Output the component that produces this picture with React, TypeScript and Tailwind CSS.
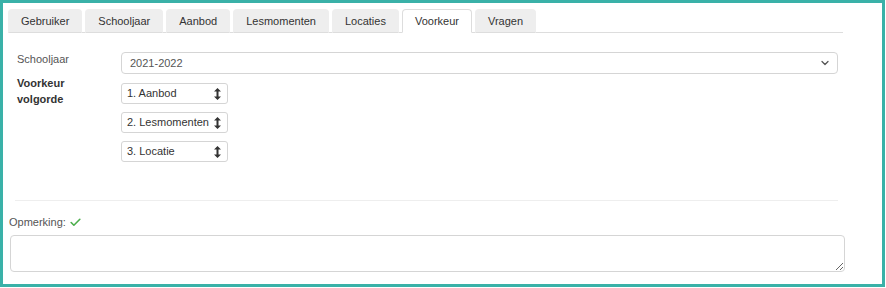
import React from 'react';
import { ChevronDown, Check } from 'lucide-react';

const tabs = ['Gebruiker', 'Schooljaar', 'Aanbod', 'Lesmomenten', 'Locaties', 'Voorkeur', 'Vragen'];
const order = ['1. Aanbod', '2. Lesmomenten', '3. Locatie'];

// font awesome style "arrows-v"
const ArrowsV = () => (
  <svg width="7" height="12" viewBox="0 0 7 12" className="fill-[#333]">
    <path d="M3.5 0 L7 3.5 H4.5 V8.5 H7 L3.5 12 L0 8.5 H2.5 V3.5 H0 Z" />
  </svg>
);

const App: React.FC = () => {
  return (
    <div className="w-[885px] h-[287px] border-[3px] border-[#3ab1a8] bg-white font-['Liberation_Sans',Arial,sans-serif] text-[11px] text-[#333]">
      <div className="pl-[5px] pt-[6px]">
        {/* Tabs */}
        <div className="flex w-[835px] gap-[3px] border-b border-[#ddd] h-[24px]">
          {tabs.map((tab) => {
            const active = tab === 'Voorkeur';
            return (
              <div
                key={tab}
                className={`h-[24px] px-[12px] flex items-center whitespace-nowrap rounded-t-[4px] border ${
                  active ? 'bg-white border-[#ddd] border-b-white' : 'bg-[#eee] border-[#eee] border-b-[#ddd]'
                }`}
              >
                {tab}
              </div>
            );
          })}
        </div>

        {/* Form */}
        <div className="pl-[9px] pt-[19px]">
          <div className="flex">
            <div className="w-[104px] text-[#555] leading-[16px] -mt-[1px]">Schooljaar</div>
            <div className="w-[717px] h-[22px] border border-[#d5d5d5] rounded-[4px] pl-[8px] pr-[6px] flex items-center justify-between text-[#555]">
              <span>2021-2022</span>
              <ChevronDown size={12} strokeWidth={2.5} color="#555" />
            </div>
          </div>

          <div className="flex mt-[1px]">
            <div className="w-[104px] font-bold leading-[16px]">
              Voorkeur
              <br />
              volgorde
            </div>
            <div className="flex flex-col gap-[8px] pt-[8px]">
              {order.map((item) => (
                <div
                  key={item}
                  className="w-[107px] h-[21px] border border-[#d5d5d5] rounded-[3px] pl-[5px] pr-[6px] flex items-center justify-between whitespace-nowrap"
                >
                  <span>{item}</span>
                  <ArrowsV />
                </div>
              ))}
            </div>
          </div>

          <div className="mt-[38px] -ml-[2px] w-[823px] h-px bg-[#eee]" />
        </div>

        {/* Opmerking */}
        <div className="pl-[1px] mt-[13px]">
          <div className="flex items-center gap-[3px] leading-[16px] text-[#555]">
            Opmerking:
            <Check size={13} strokeWidth={3} color="#4cae4c" />
          </div>
          <textarea className="block mt-[5px] ml-[1px] w-[835px] h-[37px] border border-[#d5d5d5] rounded-[4px] resize-y" />
        </div>
      </div>
    </div>
  );
};

export default App;
